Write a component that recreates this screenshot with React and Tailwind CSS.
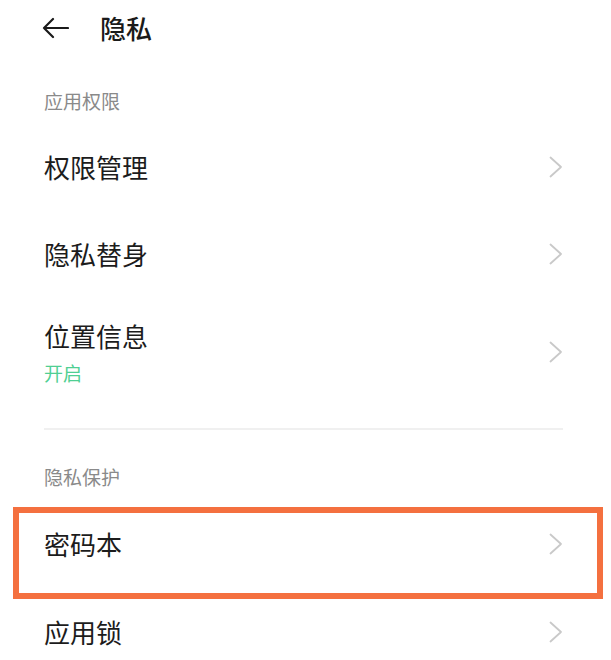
import React from 'react';

const font = { fontFamily: '"Noto Sans CJK SC", "Noto Sans", sans-serif' };

const Chevron = () => (
    <svg width="14" height="22" viewBox="0 0 14 22" fill="none" className="shrink-0">
        <polyline points="1.5,1.5 12,11 1.5,20.5" stroke="#c9c9c9" strokeWidth="1.8" strokeLinecap="round" strokeLinejoin="round" />
    </svg>
);

const SectionLabel = ({ children, className = '' }) => (
    <div className={`h-[46px] px-[44px] flex items-center text-[19px] text-[#8a8a8a] ${className}`}>
        {children}
    </div>
);

const Row = ({ title, sub, className = '', children }) => (
    <div className={`relative flex items-center justify-between pl-[44px] pr-[48px] ${className}`}>
        <div className="flex flex-col">
            <span className="text-[26px] leading-[34px] text-[#1c1c1c]">{title}</span>
            {sub && <span className="mt-[8px] text-[19px] leading-[24px] text-[#4fcf93]">{sub}</span>}
        </div>
        <Chevron />
        {children}
    </div>
);

const App = () => {
    return (
        <div className="w-[611px] h-[660px] overflow-hidden bg-white" style={font}>
            {/* header */}
            <div className="h-[55px] flex items-center pl-[42px]">
                <svg width="27" height="22" viewBox="0 0 27 22" fill="none">
                    <path d="M26 11H2M11 2L2 11L11 20" stroke="#1a1a1a" strokeWidth="2.2" strokeLinecap="round" strokeLinejoin="round" />
                </svg>
                <span className="ml-[31px] text-[26px] font-medium text-[#1a1a1a]">隐私</span>
            </div>

            <SectionLabel className="mt-[23px]">应用权限</SectionLabel>
            <Row title="权限管理" className="h-[86px]" />
            <Row title="隐私替身" className="h-[87px]" />
            <Row title="位置信息" sub="开启" className="h-[110px]" />

            <div className="mt-[21px] ml-[44px] w-[519px] h-[2px] bg-[#f0f0f0]" />

            <SectionLabel className="mt-[24px]">隐私保护</SectionLabel>
            <Row title="密码本" className="h-[88px]">
                <div className="absolute left-[13px] top-[7px] w-[590px] h-[92px] border-[6px] border-[#f4703f] pointer-events-none" />
            </Row>
            <Row title="应用锁" className="h-[87px]" />
        </div>
    );
};

export default App;
